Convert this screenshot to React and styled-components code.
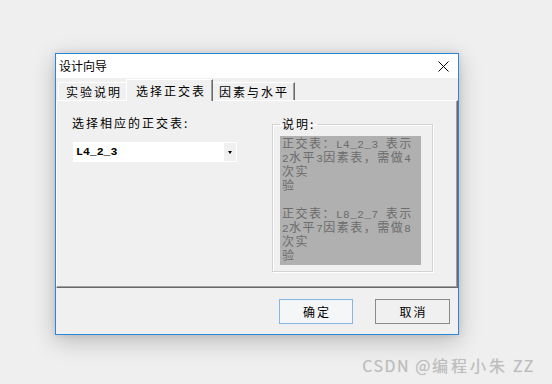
import React from "react";
import styled, { createGlobalStyle } from "styled-components";

const Global = createGlobalStyle`
  html, body { margin: 0; padding: 0; background: #efefef; }
  body {
    width: 552px; height: 384px; overflow: hidden;
    font-family: "Noto Sans CJK SC", "Liberation Sans", sans-serif;
  }
`;

const Page = styled.div`
  position: relative;
  width: 552px;
  height: 384px;
  box-sizing: border-box;
  padding: 53px 0 0 55px;
  background: #efefef;
`;

const Dialog = styled.div`
  width: 404px;
  height: 282px;
  box-sizing: border-box;
  border: 1px solid #2a86d8;
  background: #f0f0f0;
  box-shadow: 0 6px 22px rgba(0, 0, 0, 0.22), 0 0 7px rgba(0, 0, 0, 0.1);
  display: flex;
  flex-direction: column;
`;

const TitleBar = styled.div`
  height: 24px;
  flex: none;
  background: #fff;
  display: flex;
  align-items: center;
  justify-content: space-between;
  padding: 0 9px 0 3px;
  font-size: 12px;
  color: #000;
`;

const Title = styled.span`
  line-height: 16px;
`;

const TabStrip = styled.div`
  height: 21px;
  flex: none;
  margin-top: 1px;
  padding-left: 2px;
  display: flex;
  align-items: flex-end;
`;

const Tab = styled.div`
  position: relative;
  box-sizing: border-box;
  height: ${(p) => (p.$active ? "22px" : "18px")};
  margin: ${(p) => (p.$active ? "0 -2px -1px -2px" : "0")};
  z-index: ${(p) => (p.$active ? 1 : 0)};
  padding: ${(p) => (p.$active ? "0 6px 0 9px" : "0 5px 0 7px")};
  display: flex;
  align-items: center;
  background: #f0f0f0;
  border-top: 1px solid #fff;
  border-left: 1px solid #fff;
  border-right: 1px solid #696969;
  box-shadow: inset -1px 0 0 #a0a0a0;
  font-size: 12px;
  line-height: 16px;
  letter-spacing: 2px;
  color: #000;
  white-space: nowrap;
`;

const Panel = styled.div`
  height: 188px;
  flex: none;
  box-sizing: border-box;
  border-top: 1px solid #fff;
  border-left: 1px solid #fff;
  border-right: 1px solid #696969;
  border-bottom: 1px solid #696969;
  box-shadow: inset -1px -1px 0 #a0a0a0;
  padding: 14px 0 0 15px;
  display: flex;
  align-items: flex-start;
`;

const LeftCol = styled.div`
  width: 200px;
  display: flex;
  flex-direction: column;
  align-items: flex-start;
  gap: 11px;
`;

const Label = styled.div`
  font-size: 12px;
  line-height: 16px;
  letter-spacing: 2px;
  color: #000;
  white-space: nowrap;
`;

const Combo = styled.div`
  width: 164px;
  height: 20px;
  margin-left: 1px;
  box-sizing: border-box;
  background: #fff;
  display: flex;
  align-items: stretch;
  padding: 1px;
`;

const ComboText = styled.div`
  flex: 1;
  padding-left: 2px;
  display: flex;
  align-items: center;
  font-family: "Liberation Mono", monospace;
  font-weight: bold;
  font-size: 11.5px;
  line-height: 14px;
  color: #000;
`;

const ComboButton = styled.div`
  width: 12px;
  background: #f0f0f0;
  display: flex;
  align-items: center;
  justify-content: center;
`;

const Arrow = styled.div`
  width: 0;
  height: 0;
  border-left: 2.5px solid transparent;
  border-right: 2.5px solid transparent;
  border-top: 3px solid #000;
`;

const Group = styled.fieldset`
  margin: 1px 0 0 0;
  width: 161px;
  box-sizing: border-box;
  padding: 4px 10px 6px 7px;
  border: 1px solid #d3d3d3;
  box-shadow: inset 1px 1px 0 #fff, 1px 1px 0 #fff;
`;

const Legend = styled.legend`
  padding: 0 3px 0 2px;
  font-size: 12px;
  line-height: 16px;
  letter-spacing: 2px;
  color: #000;
`;

const InfoBox = styled.div`
  width: 141px;
  height: 129px;
  background: #b0b0b0;
  padding-left: 2px;
  box-sizing: border-box;
  color: #6c6c6c;
  font-size: 12px;
  letter-spacing: 1.5px;
  line-height: 14px;
`;

const Line = styled.div`
  height: 14px;
  line-height: 14px;
  white-space: nowrap;
`;

const Ascii = styled.span`
  font-family: "Liberation Mono", monospace;
  font-size: 11px;
  line-height: 11px;
  letter-spacing: 0.5px;
`;

const ButtonRow = styled.div`
  flex: 1;
  display: flex;
  justify-content: flex-end;
  align-items: flex-start;
  gap: 22px;
  padding: 11px 8px 0 0;
`;

const Button = styled.div`
  width: ${(p) => (p.$primary ? "74px" : "75px")};
  height: 25px;
  box-sizing: border-box;
  display: flex;
  align-items: center;
  justify-content: center;
  padding-left: 2px;
  background: ${(p) => (p.$primary ? "#f4f6f8" : "#f0f0f0")};
  border: 1px solid ${(p) => (p.$primary ? "#86b6e6" : "#8a8a8a")};
  font-size: 12px;
  line-height: 16px;
  letter-spacing: 2px;
  color: #000;
`;

const Watermark = styled.div`
  position: absolute;
  right: 17px;
  bottom: 9px;
  font-size: 16px;
  line-height: 20px;
  letter-spacing: 1.5px;
  color: #bdbdbd;
  text-shadow: 0 0 1px rgba(0, 0, 0, 0.12);
  white-space: nowrap;
`;

const WideCJK = styled.span`
  letter-spacing: 3px;
`;

const CloseIcon = () => (
  <svg width="11" height="11" viewBox="0 0 11 11">
    <path d="M0.5 0.5 L10.5 10.5 M10.5 0.5 L0.5 10.5" stroke="#000" strokeWidth="1" />
  </svg>
);

const infoBlocks = [
  { table: "L4_2_3", factors: "3", runs: "4" },
  { table: "L8_2_7", factors: "7", runs: "8" },
];

export default function App() {
  return (
    <Page>
      <Global />
      <Dialog>
        <TitleBar>
          <Title>设计向导</Title>
          <CloseIcon />
        </TitleBar>
        <TabStrip>
          <Tab>实验说明</Tab>
          <Tab $active>选择正交表</Tab>
          <Tab>因素与水平</Tab>
        </TabStrip>
        <Panel>
          <LeftCol>
            <Label>选择相应的正交表:</Label>
            <Combo>
              <ComboText>L4_2_3</ComboText>
              <ComboButton>
                <Arrow />
              </ComboButton>
            </Combo>
          </LeftCol>
          <Group>
            <Legend>说明:</Legend>
            <InfoBox>
              {infoBlocks.map((b, i) => (
                <React.Fragment key={b.table}>
                  {i > 0 && <Line />}
                  <Line>
                    正交表：<Ascii>{b.table} </Ascii>表示
                  </Line>
                  <Line>
                    <Ascii>2</Ascii>水平<Ascii>{b.factors}</Ascii>因素表，需做<Ascii>{b.runs}</Ascii>
                  </Line>
                  <Line>次实</Line>
                  <Line>验</Line>
                </React.Fragment>
              ))}
            </InfoBox>
          </Group>
        </Panel>
        <ButtonRow>
          <Button $primary>确定</Button>
          <Button>取消</Button>
        </ButtonRow>
      </Dialog>
      <Watermark>
        CSDN @<WideCJK>编程小朱</WideCJK> ZZ
      </Watermark>
    </Page>
  );
}
